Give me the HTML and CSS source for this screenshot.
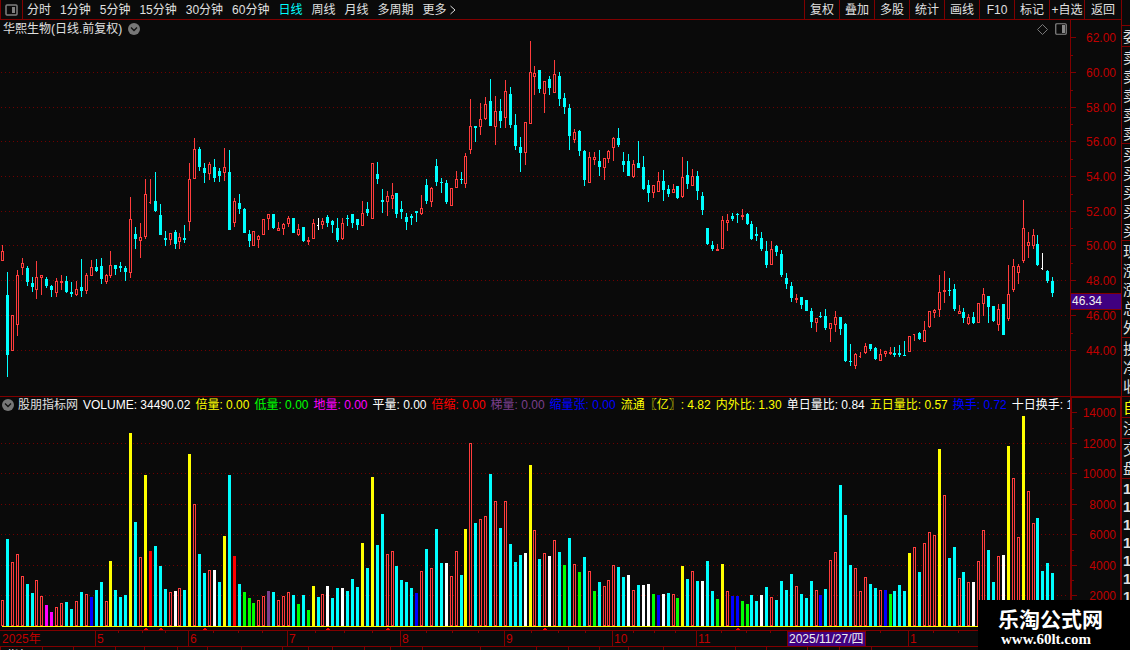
FILE: index.html
```html
<!DOCTYPE html>
<html lang="zh-CN">
<head>
    <meta charset="UTF-8">
    <meta name="viewport" content="width=device-width, initial-scale=1.0">
    <title>华熙生物 日线</title>
    <link rel="stylesheet" href="styles.css">
</head>
<body>
    <div class="app">
        <main class="main">
            <nav class="toolbar">
                <button class="panel-toggle" aria-label="侧栏">
                    <svg width="13" height="12" viewBox="0 0 13 12"><rect x="1" y="1" width="11" height="10" rx="1" fill="none" stroke="#808080" stroke-width="1.5"/><rect x="7" y="3" width="3" height="6" fill="#808080"/></svg>
                </button>
                <div class="periods">
                    <button>分时</button>
                    <button>1分钟</button>
                    <button>5分钟</button>
                    <button>15分钟</button>
                    <button>30分钟</button>
                    <button>60分钟</button>
                    <button class="active">日线</button>
                    <button>周线</button>
                    <button>月线</button>
                    <button>多周期</button>
                    <button class="more">更多<svg width="8" height="10" viewBox="0 0 8 10"><path d="M1.5 1 6 5 1.5 9" fill="none" stroke="#e0e0e0"/></svg></button>
                </div>
                <div class="tools">
                    <button>复权</button>
                    <button>叠加</button>
                    <button>多股</button>
                    <button>统计</button>
                    <button>画线</button>
                    <button>F10</button>
                    <button>标记</button>
                    <button>+自选</button>
                    <button>返回</button>
                </div>
            </nav>

            <section class="panel">
                <div class="plot">
                    <header class="plot-title">
                        <span>华熙生物(日线.前复权)</span>
                        <button aria-label="展开">
                            <svg width="12" height="12" viewBox="0 0 12 12"><circle cx="6" cy="6" r="6" fill="#777"/><path d="M3 4.500 6 7.500 9 4.500" fill="none" stroke="#111" stroke-width="1.3"/></svg>
                        </button>
                        <span class="plot-icons">
                            <svg width="11" height="11" viewBox="0 0 11 11"><path d="M5.500 .5 10.500 5.500 5.500 10.500 .5 5.500Z" fill="none" stroke="#777"/></svg>
                            <svg width="12" height="12" viewBox="0 0 12 12"><rect x=".75" y=".75" width="10.500" height="10.500" rx="1" fill="none" stroke="#888" stroke-width="1.2"/><rect x="7" y="2" width="3" height="8" fill="#888"/></svg>
                        </span>
                    </header>
                    <svg class="chart" id="priceChart" height="358"></svg>
                </div>
                <svg class="axis" id="priceAxis" height="376"></svg>
            </section>

            <section class="panel volume">
                <div class="plot">
                    <header class="indicators">
                        <button aria-label="展开">
                            <svg width="12" height="12" viewBox="0 0 12 12"><circle cx="6" cy="6" r="6" fill="#777"/><path d="M3 4.500 6 7.500 9 4.500" fill="none" stroke="#111" stroke-width="1.3"/></svg>
                        </button>
                        <span class="name">股朋指标网</span>
                        <span class="white">VOLUME: 34490.02</span>
                        <span class="yellow">倍量: 0.00</span>
                        <span class="green">低量: 0.00</span>
                        <span class="magenta">地量: 0.00</span>
                        <span class="white">平量: 0.00</span>
                        <span class="red">倍缩: 0.00</span>
                        <span class="purple">梯量: 0.00</span>
                        <span class="blue">缩量张: 0.00</span>
                        <span class="yellow">流通〖亿〗: 4.82</span>
                        <span class="yellow">内外比: 1.30</span>
                        <span class="white">单日量比: 0.84</span>
                        <span class="yellow">五日量比: 0.57</span>
                        <span class="blue">换手: 0.72</span>
                        <span class="white">十日换手: 1</span>
                    </header>
                    <svg class="chart" id="volumeChart" height="217"></svg>
                </div>
                <svg class="axis" id="volumeAxis" height="233"></svg>
            </section>

            <svg class="dates" id="dateAxis" height="20"></svg>
        </main>

        <aside class="quote">
            <ul class="group head"></ul>
            <ul class="group"><li>委</li></ul>
            <ul class="group"><li>卖</li><li>卖</li><li>卖</li><li>卖</li><li>卖</li></ul>
            <ul class="group"><li>买</li><li>买</li><li>买</li><li>买</li><li>买</li></ul>
            <ul class="group"><li>现</li><li>涨</li><li>涨</li><li>总</li><li>外</li></ul>
            <ul class="group"><li>换</li><li>净</li><li>收</li></ul>
            <ul class="group"><li class="yellow">自</li></ul>
            <ul class="group"><li>注</li></ul>
            <ul class="group"><li>交</li><li>盘</li></ul>
            <ul class="group ticks"><li>1</li><li>1</li><li>1</li><li>1</li><li>1</li><li>1</li><li>1</li></ul>
        </aside>
    </div>

    <a class="brand" href="#">
        <span class="brand-name">乐淘公式网</span>
        <span class="brand-url">www.60lt.com</span>
    </a>
    <script src="chart.js"></script>
</body>
</html>
```
FILE: styles.css
```css
* {
    box-sizing: border-box;
}
body {
    margin: 0;
    height: 100vh;
    overflow: hidden;
    background: #0a0a0a;
    color: #e0e0e0;
    font: 12px/16px "Liberation Sans", "Noto Sans CJK SC", sans-serif;
}
button {
    padding: 0;
    border: 0;
    background: none;
    color: inherit;
    font: inherit;
    white-space: nowrap;
    cursor: pointer;
}
svg {
    display: block;
}
.app {
    display: grid;
    grid-template-columns: minmax(0, 1fr) 9px;
    height: 100%;
}
.main {
    overflow: hidden;
}

/* toolbar */
.toolbar {
    display: flex;
    height: 20px;
    border-bottom: 1px solid #800000;
}
.panel-toggle {
    display: flex;
    align-items: center;
    justify-content: center;
    width: 23px;
    border: 0 solid #800000;
    border-width: 0 1px;
}
.periods {
    display: flex;
    gap: 9px;
    padding-left: 4px;
}
.periods .active {
    color: #00ffff;
}
.more {
    display: flex;
    align-items: center;
    gap: 2px;
}
.tools {
    display: flex;
    margin-left: auto;
}
.tools button {
    width: 35px;
    border-left: 1px solid #800000;
}
.tools button:last-child {
    width: 37px;
}

/* chart panels */
.panel {
    display: grid;
    grid-template-columns: minmax(0, 1fr) 51px;
    border-bottom: 1px solid #800000;
}
.plot {
    overflow: hidden;
}
.plot-title {
    display: flex;
    align-items: center;
    gap: 6px;
    height: 18px;
    padding: 0 3px;
}
.plot-icons {
    display: flex;
    align-items: center;
    gap: 7px;
    margin-left: auto;
}
.chart, .dates {
    width: 100%;
    shape-rendering: crispEdges;
}
.axis {
    width: 100%;
    border-left: 1px solid #800000;
    shape-rendering: crispEdges;
}
.volume .axis {
    border: 1px solid #800000;
    border-width: 1px 1px 0 2px;
}
.indicators {
    display: flex;
    align-items: center;
    gap: 5px;
    height: 16px;
    padding-left: 2px;
    white-space: nowrap;
}
.indicators .name {
    margin-left: -1px;
}
.indicators span {
    flex: none;
}
svg text {
    font-size: 12px;
    fill: #c00000;
}
svg .light {
    fill: #f0f0f0;
}
.white { color: #ffffff; }
.yellow { color: #ffff00; }
.green { color: #00ff00; }
.magenta { color: #ff00ff; }
.red { color: #ff0000; }
.purple { color: #7b3f8c; }
.blue { color: #0000ff; }

/* quote column, mostly scrolled out to the right */
.quote {
    overflow: hidden;
    border-left: 1px solid #800000;
}
.group {
    margin: 0;
    padding: 1px 0 0 1px;
    border-bottom: 1px solid #800000;
    list-style: none;
    font-size: 15px;
    line-height: 19px;
    white-space: nowrap;
}
.head {
    height: 26px;
}
.ticks {
    font-weight: bold;
    line-height: 18px;
}

.brand {
    position: absolute;
    right: 0;
    bottom: 0;
    display: flex;
    flex-direction: column;
    padding: 5px 27px 3px 20px;
    background: #000;
    color: #fff;
    text-decoration: none;
}
.brand-name {
    font: bold 21px/27px "Noto Sans CJK SC", sans-serif;
}
.brand-url {
    padding-left: 3px;
    font: bold 15px/15px "Liberation Serif", serif;
}
```
FILE: chart.js
```js
const SVG_NS = "http://www.w3.org/2000/svg";
const BG = "#0a0a0a";
const LINE = "#800000";
const COLORS = {
    r: "#ff3c3c", R: "#ff0000", c: "#00ffff", w: "#ffffff", y: "#ffff00",
    g: "#00ff00", b: "#0000ff", m: "#ff00ff", p: "#7b3f8c"
};

// type, high, body top, body bottom, low
const candles = `
r 245 251 261 261,c 272 295 355 377,r 315 315 351 351,r 270 275 325 336,r 258 263 268 275,
c 266 268 282 286,c 277 283 287 292,r 261 277 290 299,r 275 275 278 295,c 277 279 286 288,
c 285 286 290 297,r 278 281 293 297,r 275 281 283 290,c 276 281 292 293,c 282 292 294 297,
r 281 289 295 296,c 259 287 291 297,r 273 275 291 294,r 260 267 276 276,c 259 267 271 272,
c 258 266 279 284,r 274 275 282 284,r 251 265 276 278,c 265 265 269 275,c 262 266 268 272,
c 266 268 272 281,r 197 219 273 278,c 227 234 239 249,r 223 237 241 258,r 179 194 237 239,
r 179 202 203 204,c 172 201 211 212,c 204 215 235 235,c 231 238 240 246,r 233 233 240 245,
c 230 232 244 249,r 233 237 242 249,c 225 238 240 243,r 163 179 222 231,r 138 149 179 179,
c 147 149 167 171,c 163 168 173 183,r 162 164 174 180,c 159 167 178 182,c 168 171 176 182,
r 148 167 173 181,c 150 172 230 230,r 198 201 223 227,c 194 203 209 214,c 208 209 233 233,
c 230 234 241 247,r 231 231 246 246,r 235 236 240 248,r 219 219 235 235,r 214 214 219 230,
c 214 214 228 229,r 222 228 231 231,r 223 224 229 235,r 216 218 224 227,c 218 218 233 233,
r 224 229 235 236,c 227 227 241 242,r 237 240 242 245,r 219 223 239 239,w 218 225 226 230,
r 218 221 225 229,c 215 217 223 227,c 220 221 225 233,c 218 228 240 242,r 218 223 239 240,
c 215 218 219 226,c 214 214 223 228,c 219 219 225 230,r 201 213 226 226,c 202 209 213 216,
r 163 163 219 219,c 162 174 179 184,c 189 200 202 213,r 191 196 202 216,r 183 195 199 209,
c 193 193 214 218,c 201 209 212 219,c 213 217 222 230,c 214 216 218 225,c 211 211 213 222,
r 195 208 214 215,c 179 185 201 204,r 187 188 202 207,c 159 166 182 186,c 178 182 183 193,
c 180 183 202 204,r 188 188 206 206,r 171 179 188 188,c 172 179 180 184,r 153 156 184 188,
r 99 126 150 154,c 126 126 128 142,r 103 119 127 135,r 97 104 119 120,c 79 101 126 126,
r 96 111 127 145,c 99 111 121 128,r 80 91 118 128,c 87 94 125 128,c 114 125 146 150,
c 137 147 153 172,r 122 122 153 165,r 41 72 124 124,r 66 73 77 95,c 70 70 89 93,
r 81 81 94 113,c 76 79 88 95,r 60 74 93 93,c 72 76 99 106,c 93 98 107 114,
c 104 108 136 150,r 129 132 140 143,c 130 131 151 156,c 150 151 180 186,r 152 157 183 183,
r 152 157 160 165,c 150 161 167 176,r 158 158 168 180,r 150 151 159 163,r 137 138 148 161,
c 128 138 145 147,c 152 161 165 172,c 154 161 176 176,r 160 164 177 178,c 141 163 168 168,
c 156 167 189 190,c 180 185 193 202,r 185 185 193 198,r 172 181 192 192,c 170 181 190 201,
c 185 189 194 197,r 184 189 193 193,c 186 186 198 199,r 157 177 197 198,c 161 175 184 189,
r 169 176 186 186,c 171 176 191 200,c 192 196 210 215,c 228 228 244 245,c 241 245 249 251,
r 244 249 251 251,r 216 220 249 249,r 214 220 223 231,c 213 216 219 221,c 213 214 215 223,
r 209 215 217 220,c 213 214 224 225,c 221 224 239 240,c 227 234 236 241,c 232 238 249 251,
c 241 251 265 268,r 241 249 265 265,c 245 246 252 256,c 250 254 275 277,c 273 278 284 289,
c 282 286 298 302,r 294 298 300 303,c 297 297 305 309,c 300 300 311 311,c 308 311 322 328,
r 318 318 323 332,c 312 316 317 318,c 309 316 328 330,r 323 323 329 342,r 311 317 325 332,
c 317 317 329 335,c 323 324 361 362,c 344 361 362 366,r 353 354 366 369,r 352 356 357 358,
r 343 346 353 354,c 344 344 349 351,c 347 348 359 360,r 349 354 361 361,r 351 351 354 357,
r 347 352 354 355,c 347 353 355 357,c 345 353 355 357,c 341 355 356 356,r 336 336 352 352,
r 334 334 335 341,c 332 333 339 340,r 321 330 342 342,r 311 311 327 328,r 309 310 313 318,
r 275 292 310 317,r 271 290 292 303,c 278 290 291 296,c 284 289 309 311,r 305 311 314 314,
c 308 312 318 323,r 314 317 324 325,c 312 317 323 324,r 303 303 323 323,r 288 294 304 316,
c 296 296 307 323,c 306 306 321 322,r 304 309 325 331,c 304 304 335 335,r 265 294 319 321,
r 259 266 290 292,r 264 266 273 284,r 200 228 261 263,r 232 242 246 258,r 229 235 246 249,
c 235 244 265 266,w 253 268 269 270,c 270 271 281 283,c 277 281 293 297`;

// colour and bar height
const volumes = `
r26 c87 r64 r72 r50 c42 c33 r46 r30 m21 m14 r19 r23 c24 c17 r25 c34 r32 b29 c36
c44 r25 y65 c36 c29 c31 y193 c104 r69 y151 R75 c80 c60 c37 r34 w35 r38 c36 y172 r122
c72 c53 r56 w56 c44 y90 c151 R70 c42 g34 g28 g23 r26 r30 p35 c34 r26 r30 r34 c31
g22 c31 g16 y40 c29 r32 w40 c28 c38 w38 c35 c47 c39 y83 c58 y149 c81 c112 r72 r75
c60 c46 c44 c38 b33 r55 c77 r58 c97 c63 w63 r50 r75 c51 y97 r183 c103 r107 r110 c152
r125 c98 r125 c82 c64 c71 w73 y161 r96 c67 r73 w70 r86 c74 g61 c88 r62 g54 c69 r55
g35 c44 r40 r46 r61 c59 c49 w51 r36 c41 w41 w42 g32 b31 w32 c33 r32 g28 y60 c47
r55 c45 w45 c65 c35 g27 y62 r35 b30 b30 g25 g22 c31 c25 w31 c39 r29 c26 c45 c36
c52 r40 c32 c28 c45 r36 b31 c37 r66 r74 c141 c111 c61 r58 r35 r49 c42 c38 r36 b36
g32 c35 c41 c35 y73 r79 c54 r83 r94 r91 y177 r131 c68 c79 r48 c54 r44 w44 r65 r96
c76 c44 r70 w71 y180 r148 r89 y210 r135 r103 c108 c55 c63 c53`;

function add(svg, tag, attrs, text) {
    const el = document.createElementNS(SVG_NS, tag);
    for (const key in attrs) el.setAttribute(key, attrs[key]);
    if (text) el.textContent = text;
    svg.appendChild(el);
}

function rect(svg, x, y, width, height, fill) {
    if (height > 0) add(svg, "rect", { x, y, width, height, fill });
}

function barX(i) {
    return Math.floor(2.4595 + i * 4.9309);
}

function body(svg, x, y, height, type) {
    rect(svg, x - 1, y, 3, height, COLORS[type]);
    if (type === "r") rect(svg, x, y + 1, 1, height - 2, BG);
}

function gridLines(svg, rows, top) {
    rows.forEach(y => add(svg, "line", {
        x1: 1, x2: 1066, y1: y - top + 0.5, y2: y - top + 0.5,
        stroke: "#700000", "stroke-dasharray": "1 3"
    }));
}

function drawPrice() {
    const svg = document.getElementById("priceChart");
    const top = 38;
    gridLines(svg, [72, 107, 141, 176, 211, 245, 280, 315, 350], top);
    candles.trim().split(/,\s*/).forEach((row, i) => {
        const [type, ...values] = row.split(" ");
        const [high, open, close, low] = values.map(v => v - top);
        const x = barX(i);
        rect(svg, x, high, 1, open - high, COLORS[type]);
        rect(svg, x, close, 1, low - close, COLORS[type]);
        if (close - open === 1 && type !== "c") rect(svg, x - 1, open, 2, 1, COLORS[type]);
        else body(svg, x, open, close - open, type);
    });
}

function drawVolume() {
    const svg = document.getElementById("volumeChart");
    gridLines(svg, [443, 473, 504, 534, 565, 595], 413);
    const base = 213;
    volumes.trim().split(/\s+/).forEach((item, i) => {
        const height = Number(item.slice(1));
        body(svg, barX(i), base - height, height, item[0]);
    });
    add(svg, "rect", { x: 2, y: base, width: "100%", height: 1, fill: "#ffff00" });
    [146, 161, 205, 328, 388, 545, 738].forEach(x => {
        rect(svg, x - 1, base + 2, 2, 1, "#ff0000");
        rect(svg, x - 2, base + 3, 4, 1, "#ff0000");
    });
}

function drawAxis(id, top, major, minor, labels, right) {
    const svg = document.getElementById(id);
    major.forEach((y, i) => {
        rect(svg, 0, y - top, 5, 1, LINE);
        add(svg, "text", { x: right, y: y - top + 5, "text-anchor": "end" }, labels[i]);
    });
    minor.forEach(y => rect(svg, 0, y - top, 2, 1, LINE));
    return svg;
}

function drawDates() {
    const svg = document.getElementById("dateAxis");
    const months = [[95, "5"], [188, "6"], [287, "7"], [400, "8"], [504, "9"], [612, "10"], [696, "11"], [908, "1"]];
    add(svg, "text", { x: 2, y: 12 }, "2025年");
    months.forEach(([x, label]) => {
        rect(svg, x, 0, 1, 16, LINE);
        add(svg, "text", { x: x + 2, y: 12 }, label);
    });
    [118, 142, 165, 213, 238, 262, 315, 344, 372, 426, 452, 478, 531, 558, 585, 633, 654, 675, 721, 746, 770, 880, 933, 958]
        .forEach(x => rect(svg, x, 0, 1, 2, LINE));
    add(svg, "rect", { x: 0, y: 15, width: "100%", height: 1, fill: LINE });
    [0, 42, 73, 115, 144, 177, 207, 241, 282, 308, 332, 364, 390, 422, 480, 536, 568, 599, 628, 663, 735, 766, 807, 839, 871]
        .forEach(x => rect(svg, x, 16, 1, 3, LINE));
    add(svg, "rect", { x: 787.5, y: 0.5, width: 78, height: 15, fill: "#400080", stroke: LINE });
    add(svg, "text", { x: 789, y: 12, class: "light" }, "2025/11/27/四");
    // next strip, only its top edge is in view
    add(svg, "text", { x: 7, y: 29, class: "light" }, "指标");
    add(svg, "text", { x: 845, y: 29, style: "fill:#00ffff" }, "日周");
}

drawPrice();
drawVolume();
const priceAxis = drawAxis("priceAxis", 20,
    [37, 72, 107, 141, 176, 211, 245, 280, 315, 350],
    [55, 90, 124, 159, 194, 228, 263, 298, 333],
    ["62.00", "60.00", "58.00", "56.00", "54.00", "52.00", "50.00", "48.00", "46.00", "44.00"], 45);
rect(priceAxis, 0, 273, 50, 17, LINE);
rect(priceAxis, 0, 274, 50, 15, "#400080");
add(priceAxis, "text", { x: 1, y: 285, class: "light" }, "46.34");
drawAxis("volumeAxis", 398,
    [412, 443, 473, 504, 534, 565, 595],
    [428, 458, 489, 519, 550, 580],
    ["14000", "12000", "10000", "8000", "6000", "4000", "2000"], 44);
drawDates();
```
